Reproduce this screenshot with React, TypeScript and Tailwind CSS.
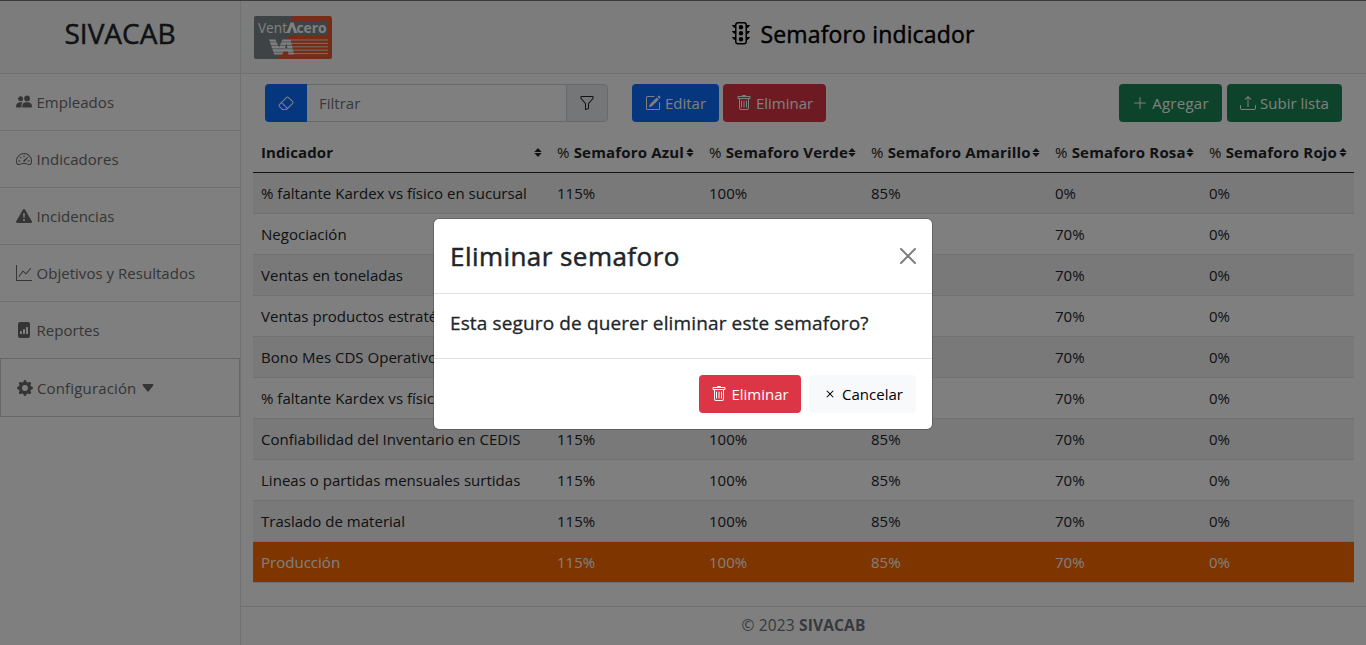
import React from "react";
import {
  BsEraser,
  BsExclamationTriangleFill,
  BsFileBarGraphFill,
  BsFunnel,
  BsGearFill,
  BsGraphUp,
  BsPencilSquare,
  BsPlusLg,
  BsSpeedometer2,
  BsStoplights,
  BsTrash,
  BsUpload,
  BsX,
} from "react-icons/bs";

const PeopleIcon = ({ className }: { className?: string }) => (
  <svg viewBox="0 0 16 16" fill="currentColor" className={className}>
    <circle cx="4.6" cy="4.7" r="2.5" />
    <circle cx="11.1" cy="4.4" r="2.9" />
    <path d="M6.4 13.6c-.3-2 .2-3.6 1.3-4.6.7-.6 1.6-.8 3.4-.8 3.300 0 4.900 1.500 4.900 4.300 0 .7-.4 1.100-1 1.100z" />
    <path d="M5.500 13.600H.9c-.6 0-.9-.3-.9-.9C0 9.900 1.500 8.200 4.600 8.200c.9 0 1.500.1 2.100.3-1.200 1.300-1.600 3-1.200 5.100z" />
  </svg>
);

const SortIcon = () => (
  <svg viewBox="0 0 8 9" className="mt-0.5 h-[9px] w-2 shrink-0" fill="currentColor">
    <path d="M4 0 7.700 4H.3zM.3 5h7.400L4 9z" />
  </svg>
);

const Logo = () => (
  <svg viewBox="0 0 78 43" className="h-[43px] w-[78px]" aria-label="VentAcero">
    <rect width="78" height="43" rx="2.500" fill="#ee5a2a" />
    <path d="M2.500 0H40q-3 2-3.500 5H74v14H38c-6 2-11 10-14 24H2.500A2.500 2.500 0 0 1 0 40.500v-38A2.500 2.500 0 0 1 2.500 0z" fill="#7c888d" />
    <text x="4" y="17" fill="#fff" fontFamily="Open Sans, sans-serif" fontSize="14.500" textLength="29" lengthAdjust="spacingAndGlyphs">Vent</text>
    <path d="M32.500 17 36.500 6.500h3L43.500 17h-3.300L38 10.500 35.800 17z" fill="#fff" />
    <text x="42.500" y="17" fill="#fff" fontFamily="Open Sans, sans-serif" fontWeight="700" fontSize="14.500" textLength="30" lengthAdjust="spacingAndGlyphs">cero</text>
    <path d="M15 23.500h6.500l3.500 8 3.500-8h8L40 38.500h-5.500l-.6-3h-4.400l-1.200 3h-8z" fill="#fff" />
    <path d="m31 32 1.500-4.500.9 4.500z" fill="#7c888d" />
    <path d="M15 26h24M15 29.400h24M15 32.800h24M15 36.200h24" stroke="#7c888d" strokeWidth=".9" opacity=".75" />
    <path d="M36 24h38M37 27.400h37M38 30.800h36M39 34.200h35M39.500 37.600H74" stroke="#fff" strokeWidth=".9" opacity=".85" />
  </svg>
);

const nav = [
  { label: "Empleados", Icon: PeopleIcon },
  { label: "Indicadores", Icon: BsSpeedometer2 },
  { label: "Incidencias", Icon: BsExclamationTriangleFill },
  { label: "Objetivos y Resultados", Icon: BsGraphUp },
  { label: "Reportes", Icon: BsFileBarGraphFill },
];

const columns = ["Indicador", "Semaforo Azul", "Semaforo Verde", "Semaforo Amarillo", "Semaforo Rosa", "Semaforo Rojo"];

const rows = [
  ["% faltante Kardex vs físico en sucursal", "115%", "100%", "85%", "0%", "0%"],
  ["Negociación", "115%", "100%", "85%", "70%", "0%"],
  ["Ventas en toneladas", "115%", "100%", "85%", "70%", "0%"],
  ["Ventas productos estratégicos", "115%", "100%", "85%", "70%", "0%"],
  ["Bono Mes CDS Operativo", "115%", "100%", "85%", "70%", "0%"],
  ["% faltante Kardex vs físico", "115%", "100%", "85%", "70%", "0%"],
  ["Confiabilidad del Inventario en CEDIS", "115%", "100%", "85%", "70%", "0%"],
  ["Lineas o partidas mensuales surtidas", "115%", "100%", "85%", "70%", "0%"],
  ["Traslado de material", "115%", "100%", "85%", "70%", "0%"],
  ["Producción", "115%", "100%", "85%", "70%", "0%"],
];

const grid = "grid grid-cols-[296px_152px_162px_184px_154px_153px]";
const button = "flex h-[38px] items-center justify-center gap-1 rounded-[4px] text-white";

function Sidebar() {
  return (
    <aside className="flex w-[241px] shrink-0 flex-col border-r border-[#dee2e6]">
      <div className="flex h-[73px] items-center justify-center border-b border-[#dee2e6] bg-[#f8f9fa] pb-2 text-[28px] text-[#212529] [-webkit-text-stroke:0.5px_currentColor]">
        SIVACAB
      </div>
      {nav.map(({ label, Icon }) => (
        <div key={label} className="flex h-[57px] items-center gap-[4.5px] border-b border-[#dee2e6] pl-4 tracking-[0.03px] text-[#6b6b6b]">
          <Icon className="size-4" />
          <span>{label}</span>
        </div>
      ))}
      <div className="-mt-px flex h-[59px] items-center gap-1 border border-[#d0d0d0] pl-4 text-[#6b6b6b]">
        <BsGearFill className="size-4" />
        <span className="tracking-[0.15px]">Configuración</span>
        <svg viewBox="0 0 12 8" className="ml-0.5 h-2 w-3" fill="currentColor">
          <path d="M1.500 0h9Q12 .3 11.200 1.600L7 7q-1 1.200-2 0L.8 1.600Q0 .3 1.500 0z" />
        </svg>
      </div>
    </aside>
  );
}

function Toolbar() {
  return (
    <div className="flex h-[60px] items-center pl-3 pr-3">
      <div className="flex h-[38px] w-[343px] overflow-hidden rounded-[4px]">
        <div className="flex w-[42px] items-center justify-center bg-[#0d6efd] text-white">
          <BsEraser className="size-4" />
        </div>
        <div className="flex flex-1 items-center border-y border-[#ced4da] pl-3 text-[#6c757d]">Filtrar</div>
        <div className="flex w-[42px] items-center justify-center rounded-r-[4px] border border-[#ced4da] bg-[#e9ecef] text-[#212529]">
          <BsFunnel className="size-4" />
        </div>
      </div>
      <div className={`${button} ml-6 w-[87px] bg-[#0d6efd]`}>
        <BsPencilSquare className="size-4" />
        <span>Editar</span>
      </div>
      <div className={`${button} ml-1 w-[103px] bg-[#dc3545]`}>
        <BsTrash className="size-4" />
        <span>Eliminar</span>
      </div>
      <div className={`${button} ml-auto w-[103px] bg-[#198754]`}>
        <BsPlusLg className="size-4" />
        <span className="tracking-[0.25px]">Agregar</span>
      </div>
      <div className={`${button} ml-[5px] w-[115px] bg-[#198754]`}>
        <BsUpload className="size-4" />
        <span>Subir lista</span>
      </div>
    </div>
  );
}

function Table() {
  return (
    <div className="text-[#212529]">
      <div className={`${grid} h-10 border-b border-[#212529] pb-0.5 font-bold`}>
        {columns.map((c, i) => (
          <div key={c} className="flex items-center justify-between whitespace-nowrap pl-2 pr-[7px]">
            <span className={i > 0 ? "tracking-[0.18px]" : "tracking-[0.1px]"}>
              {i > 0 && <span className="font-normal">% </span>}
              {c}
            </span>
            <SortIcon />
          </div>
        ))}
      </div>
      {rows.map((row, r) => (
        <div
          key={r}
          className={`${grid} h-[41px] border-b border-[#dee2e6] ${
            r === 9 ? "bg-[#ff6a00] text-white" : r % 2 === 0 ? "bg-[#f2f2f2]" : ""
          }`}
        >
          {row.map((v, c) => (
            <div key={c} className="flex items-center whitespace-nowrap pl-2 tracking-[0.02px]">
              {v}
            </div>
          ))}
        </div>
      ))}
    </div>
  );
}

function Modal() {
  return (
    <div className="flex h-[210px] w-[498px] flex-col rounded-[5px] bg-white text-[#212529] shadow-[0_0_0_1px_rgba(0,0,0,0.2)]">
      <div className="flex h-[75px] items-center justify-between border-b border-[#dee2e6] pl-4 pr-4">
        <h2 className="text-[26px] tracking-[0.45px] [-webkit-text-stroke:0.5px_currentColor]">Eliminar semaforo</h2>
        <svg viewBox="0 0 16 16" className="size-4 text-[#7f7f7f]" fill="none" stroke="currentColor" strokeWidth="2" strokeLinecap="round">
          <path d="m1 1 14 14M15 1 1 15" />
        </svg>
      </div>
      <div className="flex h-[65px] items-center border-b border-[#dee2e6] pb-1.5 pl-4 text-[19px] tracking-[0.13px] [-webkit-text-stroke:0.3px_currentColor]">
        Esta seguro de querer eliminar este semaforo?
      </div>
      <div className="flex flex-1 items-center justify-end gap-2 pr-4">
        <div className={`${button} w-[102px] bg-[#dc3545]`}>
          <BsTrash className="size-4" />
          <span>Eliminar</span>
        </div>
        <div className="flex h-[38px] w-[107px] items-center justify-center gap-1 rounded-[4px] bg-[#f8f9fa] text-black">
          <BsX className="size-4" />
          <span>Cancelar</span>
        </div>
      </div>
    </div>
  );
}

export default function App() {
  return (
    <div className="relative h-[645px] w-[1366px] overflow-hidden bg-white font-['Open_Sans',sans-serif] text-[15px] leading-6">
      <div className="flex h-full flex-col">
        <div className="h-px shrink-0 bg-[#77777c]" />
        <div className="flex min-h-0 flex-1">
          <Sidebar />
          <main className="flex min-w-0 flex-1 flex-col">
            <header className="flex h-[73px] shrink-0 items-center border-b border-[#dee2e6] bg-[#f8f9fa] pl-[13px]">
              <Logo />
              <div className="flex flex-1 items-center justify-center gap-2 pb-1.5 pl-[5px] text-[23px] text-black">
                <BsStoplights className="size-6" />
                <span className="tracking-[0.15px] [-webkit-text-stroke:0.45px_currentColor]">Semaforo indicador</span>
              </div>
            </header>
            <div className="-mt-px flex-1 px-3">
              <Toolbar />
              <Table />
            </div>
            <footer className="flex h-[39px] shrink-0 items-center justify-center border-t border-[#dee2e6] pb-[3px] text-[15.500px] tracking-[0.15px] text-[#6c757d]">
              <span>
                © 2023 <b>SIVACAB</b>
              </span>
            </footer>
          </main>
        </div>
      </div>
      <div className="absolute inset-0 flex justify-center bg-black/50 pt-[219px]">
        <Modal />
      </div>
    </div>
  );
}
